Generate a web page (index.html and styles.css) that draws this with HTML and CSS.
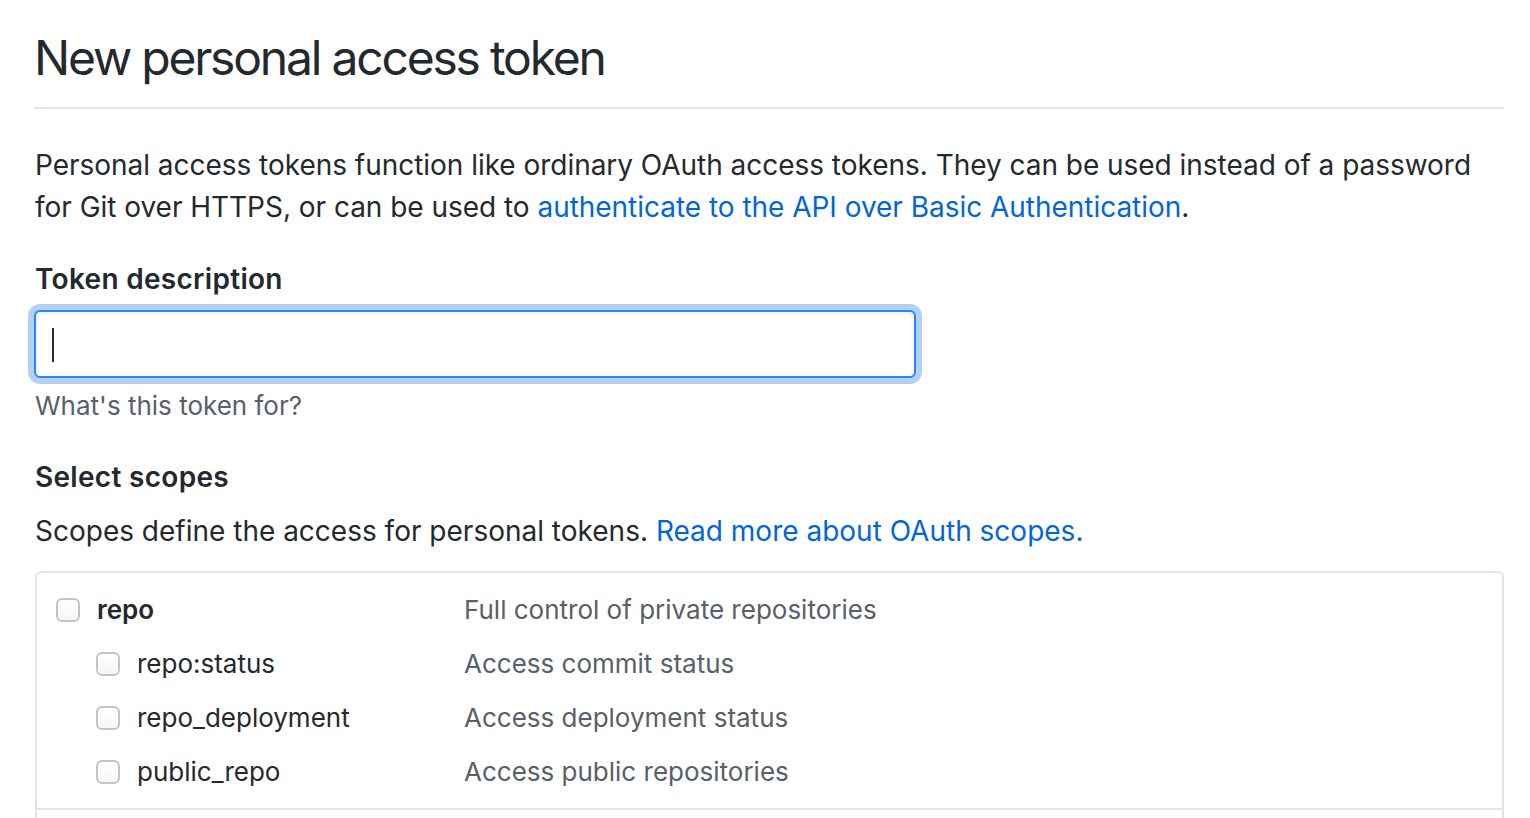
FILE: index.html
```html
<!DOCTYPE html>
<html lang="en">
<head>
<meta charset="utf-8">
<title>New personal access token</title>
<link rel="stylesheet" href="styles.css">
</head>
<body>
<div class="page">
  <h1 class="subhead">New personal access token</h1>
  <p class="intro">Personal access tokens function like ordinary OAuth access tokens. They can be used instead of a password for Git over HTTPS, or can be used to <a href="#">authenticate to the API over Basic Authentication</a>.</p>

  <div class="form-group">
    <label class="label">Token description</label>
    <div class="form-control focused"><span class="caret"></span></div>
    <p class="note">What's this token for?</p>
  </div>

  <h3 class="label scopes-title">Select scopes</h3>
  <p class="scopes-text">Scopes define the access for personal tokens. <a href="#">Read more about OAuth scopes.</a></p>

  <div class="scope-box">
    <div class="scope-group">
      <div class="scope-row">
        <div class="scope-name"><span class="checkbox"></span><strong>repo</strong></div>
        <div class="scope-desc">Full control of private repositories</div>
      </div>
      <div class="scope-row child">
        <div class="scope-name"><span class="checkbox"></span><span>repo:status</span></div>
        <div class="scope-desc">Access commit status</div>
      </div>
      <div class="scope-row child">
        <div class="scope-name"><span class="checkbox"></span><span>repo_deployment</span></div>
        <div class="scope-desc">Access deployment status</div>
      </div>
      <div class="scope-row child">
        <div class="scope-name"><span class="checkbox"></span><span>public_repo</span></div>
        <div class="scope-desc">Access public repositories</div>
      </div>
    </div>
    <div class="scope-group next"></div>
  </div>
</div>
</body>
</html>
```

FILE: styles.css
```css
* { box-sizing: border-box; }

html, body {
  margin: 0;
  padding: 0;
  background: #fff;
  overflow: hidden;
}

body {
  font-family: Inter, "Liberation Sans", Arial, sans-serif;
  font-size: 28px;
  line-height: 42px;
  color: #24292e;
}

a {
  color: #0366d6;
  text-decoration: none;
}

.page {
  padding: 28px 26px 0 34px;
}

.subhead {
  margin: 0;
  font-size: 48px;
  line-height: 60px;
  font-weight: normal;
  letter-spacing: -2.2px;
  padding-bottom: 19px;
  border-bottom: 2px solid #e1e4e8;
}

.intro {
  margin: 35px 0 0 1px;
  letter-spacing: -0.03px;
}

.form-group {
  margin-top: 30px;
}

.label {
  display: block;
  margin: 0 0 0 1px;
  font-size: 28px;
  line-height: 42px;
  font-weight: 600;
  letter-spacing: 0.3px;
}

.form-control {
  margin-top: 10px;
  width: 882px;
  height: 68px;
  border: 2px solid #2188ff;
  border-radius: 6px;
  background: #fff;
  box-shadow: inset 0 2px 4px rgba(27, 31, 35, 0.075), 0 0 0 6px rgba(3, 102, 214, 0.3);
  padding: 16px 0 0 16px;
}

.caret {
  display: block;
  width: 2px;
  height: 34px;
  background: #24292e;
}

.note {
  margin: 8px 0 0 1px;
  font-size: 26px;
  line-height: 39px;
  color: #586069;
}

.scopes-title {
  margin-top: 31px;
}

.scopes-text {
  margin: 12px 0 0 1px;
}

.scope-box {
  margin-top: 19px;
  margin-left: 1px;
  border: 2px solid #e1e4e8;
  border-bottom: none;
  border-radius: 6px 6px 0 0;
  height: 260px;
  font-size: 26px;
}

.scope-group {
  padding: 10px 0 9px 19px;
  border-bottom: 2px solid #e1e4e8;
}

.scope-group.next {
  border-bottom: none;
  padding: 0;
  height: 20px;
}

.scope-row {
  display: grid;
  grid-template-columns: 408px 1fr;
  align-items: center;
  height: 54px;
}

.scope-row.child .scope-name {
  padding-left: 40px;
}

.scope-name {
  display: flex;
  align-items: center;
  gap: 17px;
}

.scope-name strong {
  font-weight: 600;
}

.checkbox {
  flex: none;
  width: 24px;
  height: 24px;
  border: 2px solid #c4c4c4;
  border-radius: 6px;
  background: linear-gradient(#ffffff, #f6f6f6);
}

.scope-desc {
  color: #586069;
}
```
